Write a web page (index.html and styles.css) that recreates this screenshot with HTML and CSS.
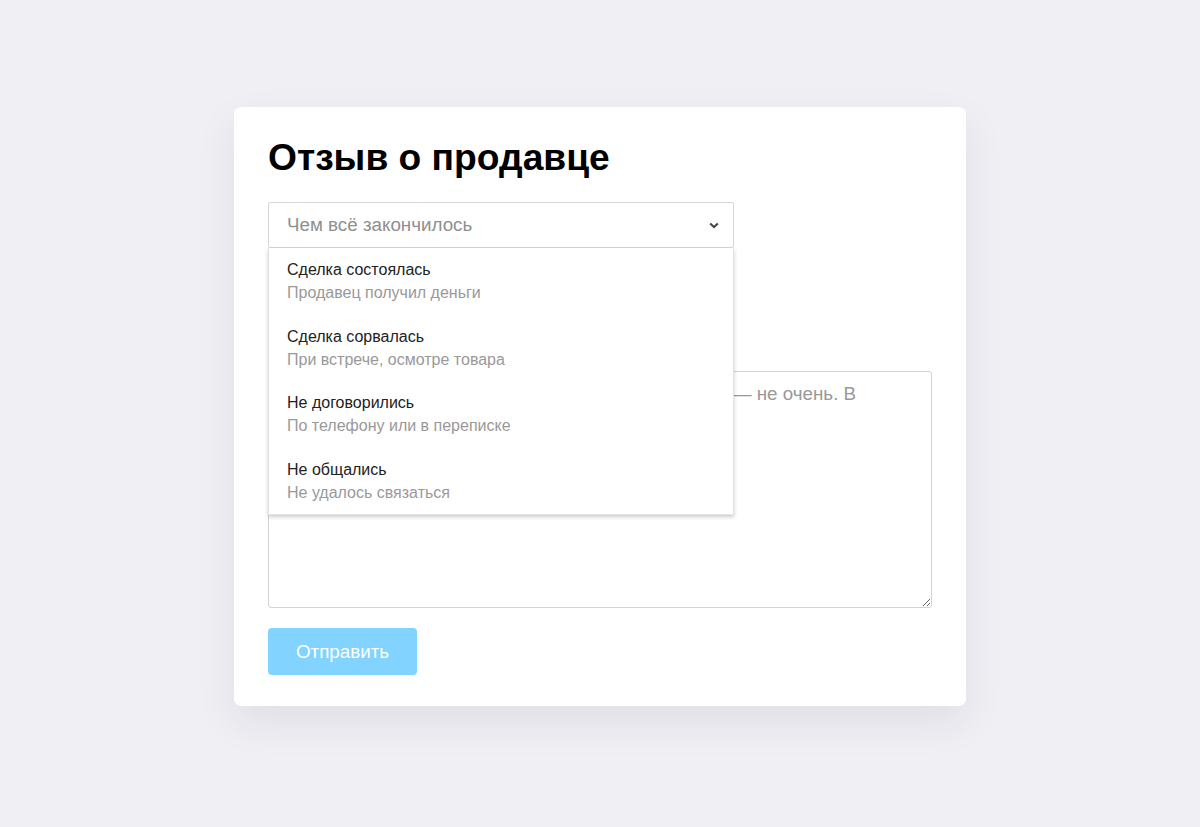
FILE: index.html
```html
<!DOCTYPE html>
<html lang="ru">
<head>
<meta charset="utf-8">
<title>Отзыв о продавце</title>
<link rel="stylesheet" href="styles.css">
</head>
<body>
<main class="card">
  <h1 class="title">Отзыв о продавце</h1>
  <div class="field">
    <div class="select">
      <span class="select-placeholder">Чем всё закончилось</span>
      <svg class="chevron" width="10" height="7" viewBox="0 0 10 7"><path d="M1.2 1.4 L5 5 L8.8 1.4" fill="none" stroke="#444" stroke-width="2"/></svg>
    </div>
    <ul class="menu">
      <li class="option"><span class="option-title">Сделка состоялась</span><span class="option-sub">Продавец получил деньги</span></li>
      <li class="option"><span class="option-title">Сделка сорвалась</span><span class="option-sub">При встрече, осмотре товара</span></li>
      <li class="option"><span class="option-title">Не договорились</span><span class="option-sub">По телефону или в переписке</span></li>
      <li class="option"><span class="option-title">Не общались</span><span class="option-sub">Не удалось связаться</span></li>
    </ul>
  </div>
  <textarea class="comment" placeholder="Расскажите, что вам понравилось в покупке, а что — не очень. В отзыве не нужно указывать личные данные."></textarea>
  <button class="submit" type="button">Отправить</button>
</main>
</body>
</html>
```
FILE: styles.css
```css
* { box-sizing: border-box; }
html, body { margin: 0; padding: 0; }
body {
  background: #efeff4;
  font-family: "Liberation Sans", Arial, sans-serif;
  min-height: 827px;
  padding-top: 107px;
}
.card {
  width: 732px;
  margin: 0 auto;
  background: #fff;
  border-radius: 7px;
  padding: 28px 34px 31px;
  box-shadow: 0 16px 40px rgba(40, 40, 70, 0.08);
  display: flex;
  flex-direction: column;
  align-items: flex-start;
}
.title {
  margin: 0 0 23px;
  font-size: 37.2px;
  line-height: 44px;
  font-weight: 700;
  color: #000;
}
.field {
  position: relative;
  width: 466px;
  margin-bottom: 123px;
}
.select {
  height: 46px;
  border: 1px solid #d6d6d6;
  border-radius: 2px;
  display: flex;
  align-items: center;
  justify-content: space-between;
  padding: 0 14px 0 18px;
}
.select-placeholder {
  font-size: 18.8px;
  color: #8f8f8f;
}
.chevron { display: block; }
.menu {
  position: absolute;
  top: 46px;
  left: 0;
  right: 0;
  margin: 0;
  padding: 0;
  list-style: none;
  background: #fff;
  border: 1px solid #e3e3e3;
  border-top: none;
  box-shadow: 0 2px 4px rgba(0, 0, 0, 0.2);
  z-index: 2;
}
.option {
  display: flex;
  flex-direction: column;
  padding: 10px 18px;
  height: 66.5px;
  font-size: 16px;
  line-height: 23px;
}
.option-title { color: #222; }
.option-sub { color: #999; }
.comment {
  display: block;
  width: 664px;
  height: 237px;
  margin: 0;
  border: 1px solid #d3d3d3;
  border-radius: 3px;
  padding: 10px 18px;
  font-family: "Liberation Sans", Arial, sans-serif;
  font-size: 18.8px;
  line-height: 23px;
  color: #333;
  resize: vertical;
}
.comment::placeholder { color: #999; }
.submit {
  margin-top: 20px;
  width: 149px;
  height: 47px;
  border: none;
  border-radius: 4px;
  background: #82d3ff;
  color: #fff;
  font-family: "Liberation Sans", Arial, sans-serif;
  font-size: 18.8px;
  padding: 0;
}
```
